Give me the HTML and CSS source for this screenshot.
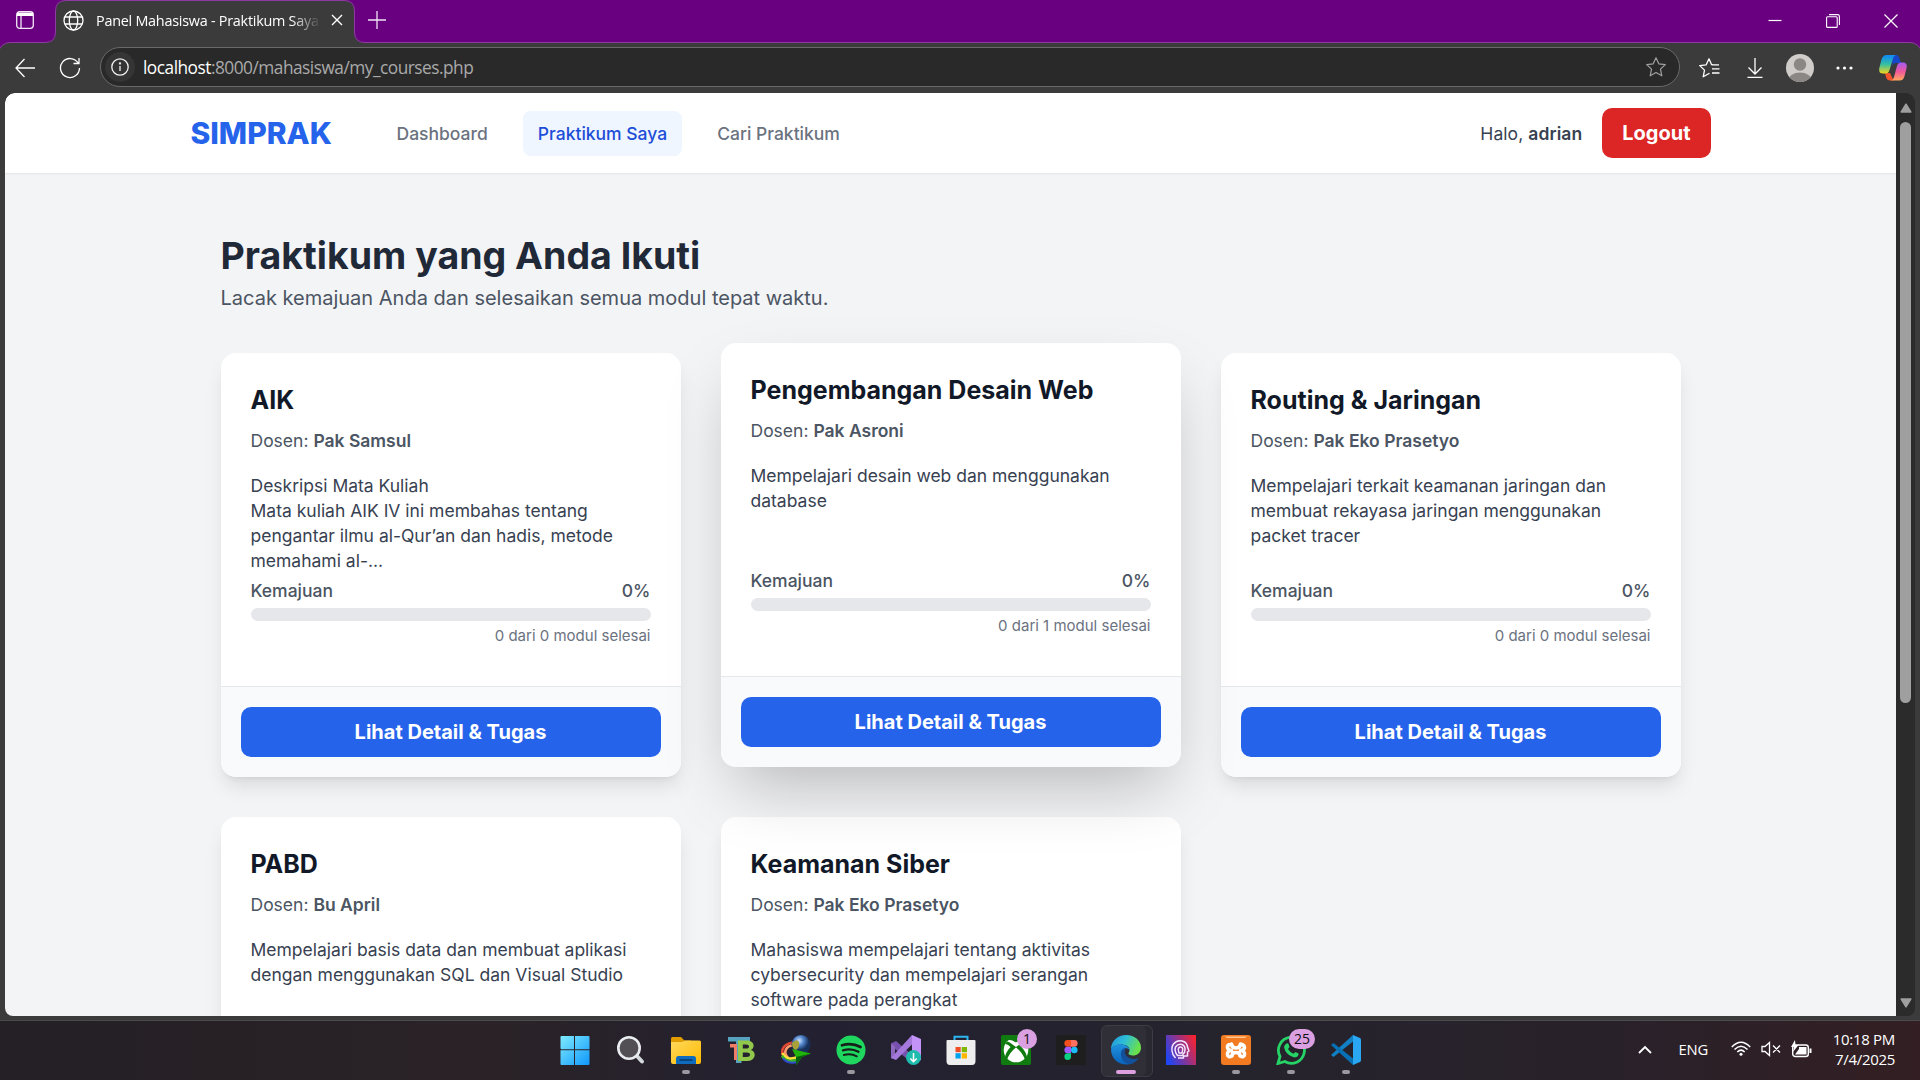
FILE: index.html
```html
<!DOCTYPE html>
<html lang="id">
<head>
<meta charset="utf-8">
<title>Panel Mahasiswa - Praktikum Saya</title>
<link rel="stylesheet" href="styles.css">
</head>
<body>
<div class="screen">
  <div class="browser">
    <svg class="frame" width="1920" height="60" viewBox="0 0 1920 60">
      <path d="M-2 70V53Q1 42.500 10 42.500H45Q55.500 42.500 55.500 32V11Q55.500 .5 66 .5H344Q354.500 .5 354.500 11V32Q354.500 42.500 365 42.500H1910Q1919 42.500 1922 53V70Z" fill="#3b3b3b" stroke="#8e3aa3"/>
    </svg>
    <div class="tabstrip">
      <svg class="workspace" width="18" height="18" viewBox="0 0 18 18" fill="none" stroke="#f3e6f6" stroke-width="1.300"><rect x=".7" y=".7" width="16.600" height="16.600" rx="3"/><path d="M1 1.500H17V5H1Z" fill="#fff" stroke="none"/><path d="M5 5V17"/></svg>
      <div class="tab">
        <svg width="21" height="21" viewBox="0 0 21 21" fill="none" stroke="#fff" stroke-width="1.300"><circle cx="10.500" cy="10.500" r="9.500"/><ellipse cx="10.500" cy="10.500" rx="4.200" ry="9.500"/><path d="M1.800 7H19.200M1.800 14H19.200"/></svg>
        <span class="tab-title">Panel Mahasiswa - Praktikum Saya</span>
        <svg width="12" height="12" viewBox="0 0 12 12" stroke="#fff" stroke-width="1.400"><path d="M1 1L11 11M11 1L1 11"/></svg>
      </div>
      <svg class="newtab" width="18" height="18" viewBox="0 0 18 18" stroke="#f0e4f4" stroke-width="1.300"><path d="M9 0V18M0 9H18"/></svg>
      <div class="window-buttons">
        <svg width="14" height="14" viewBox="0 0 14 14" stroke="#fff" stroke-width="1.200"><path d="M.5 6.500H13.500"/></svg>
        <svg width="14" height="14" viewBox="0 0 14 14" fill="none" stroke="#fff" stroke-width="1.100"><rect x=".6" y="2.800" width="10.600" height="10.600" rx="1"/><path d="M3 .6H11.500Q13.400 .6 13.400 2.500V11"/></svg>
        <svg width="14" height="14" viewBox="0 0 14 14" stroke="#fff" stroke-width="1.200"><path d="M.5 .5L13.500 13.500M13.500 .5L.5 13.500"/></svg>
      </div>
    </div>
    <div class="toolbar">
      <svg class="back" width="20" height="20" viewBox="0 0 20 20" fill="none" stroke="#fff" stroke-width="1.300"><path d="M20 10H1M9.500 1L1 10L9.500 19"/></svg>
      <svg class="reload" width="22" height="22" viewBox="0 0 22 22" fill="none" stroke="#fff" stroke-width="1.300"><path d="M19.200 6.200A9.500 9.500 0 1 0 20.500 11M20 1V6.500H14.500"/></svg>
      <div class="address">
        <span class="info"><svg width="18" height="18" viewBox="0 0 18 18" fill="none" stroke="#f2f2f2" stroke-width="1.300"><circle cx="9" cy="9" r="8.200"/><path d="M9 8V13"/><circle cx="9" cy="5.500" r=".5"/></svg></span>
        <span class="url"><b>localhost</b>:8000/mahasiswa/my_courses.php</span>
        <svg class="fav" width="20" height="20" viewBox="0 0 20 20" fill="none" stroke="#a0a0a0" stroke-width="1.200" stroke-linejoin="round"><path d="M10 .8L12.800 6.800L19.300 7.600L14.500 12.100L15.800 18.800L10 15.500L4.200 18.800L5.500 12.100L.7 7.600L7.200 6.800Z"/></svg>
      </div>
      <div class="tools">
        <svg width="21" height="20" viewBox="0 0 21 20" fill="none" stroke="#fff" stroke-width="1.300" stroke-linejoin="round"><path d="M20 6.800H14L12.500 6.500L10 .8L7.200 6.800L.7 7.600L5.500 12.100L4.200 18.800L10.500 15.200M13 10.800H20.500M13 15H20.500"/></svg>
        <svg width="16" height="20" viewBox="0 0 16 20" fill="none" stroke="#fff" stroke-width="1.300"><path d="M8 0V15.500M1.500 9.500L8 16L14.500 9.500M.5 19.300H15.500"/></svg>
        <svg width="28" height="28" viewBox="0 0 28 28"><defs><clipPath id="avatar"><circle cx="14" cy="14" r="14"/></clipPath></defs><g clip-path="url(#avatar)"><rect width="28" height="28" fill="#cfccc9"/><circle cx="14" cy="10.500" r="6.200" fill="#8b8784"/><ellipse cx="14" cy="26" rx="11.500" ry="7.500" fill="#8b8784"/></g></svg>
        <svg width="17" height="4" viewBox="0 0 17 4" fill="#fff"><circle cx="2" cy="2" r="1.600"/><circle cx="8.500" cy="2" r="1.600"/><circle cx="15" cy="2" r="1.600"/></svg>
        <svg width="28" height="26" viewBox="0 0 28 26"><defs><linearGradient id="cpa" x1="0" y1="0" x2="0" y2="1"><stop offset=".1" stop-color="#1390ec"/><stop offset=".5" stop-color="#35c0a0"/><stop offset="1" stop-color="#f4d51c"/></linearGradient><linearGradient id="cpb" x1="0" y1="0" x2="0" y2="1"><stop stop-color="#a45bf2"/><stop offset=".5" stop-color="#f0589c"/><stop offset="1" stop-color="#ffa75c"/></linearGradient></defs><path d="M13 0H17Q19.500 0 20.500 3.500L22 8H17Q14.500 8 13.500 11Z" fill="#1647c8"/><path d="M6 18H11L14.500 25.500H11Q8 25.500 7 22Z" fill="#f4542b"/><path d="M7.500 0H17.500Q15 0 14 3.500L10.500 15Q9.500 18.500 6.500 18.500H4Q-.6 18.500 .3 13L2.500 4.500Q4 0 7.500 0Z" fill="url(#cpa)"/><path d="M20.500 25.500H11Q14 25.500 15 22L18 11Q19 7.500 22 7.500H24Q28.600 7.500 27.600 13L25.500 21Q24.500 25.500 20.500 25.500Z" fill="url(#cpb)"/></svg>
      </div>
    </div>
    <div class="viewport">
      <div class="page">
        <nav class="nav">
          <div class="container nav-inner">
            <span class="brand">SIMPRAK</span>
            <div class="links"><a>Dashboard</a><a class="active">Praktikum Saya</a><a>Cari Praktikum</a></div>
            <span class="hello">Halo, <b>adrian</b></span>
            <a class="logout">Logout</a>
          </div>
        </nav>
        <main class="container main">
          <h1>Praktikum yang Anda Ikuti</h1>
          <p class="lead">Lacak kemajuan Anda dan selesaikan semua modul tepat waktu.</p>
          <div class="grid">
            <article class="card">
              <div class="card-body">
                <h3>AIK</h3><p class="dosen">Dosen: <b>Pak Samsul</b></p>
                <p class="desc">Deskripsi Mata Kuliah<br>Mata kuliah AIK IV ini membahas tentang pengantar ilmu al-Qur’an dan hadis, metode memahami al-...</p>
                <div class="progress-head"><span>Kemajuan</span><span>0%</span></div><div class="bar"></div><p class="count">0 dari 0 modul selesai</p>
              </div>
              <div class="card-foot"><a class="btn">Lihat Detail &amp; Tugas</a></div>
            </article>
            <article class="card hovered">
              <div class="card-body">
                <h3>Pengembangan Desain Web</h3><p class="dosen">Dosen: <b>Pak Asroni</b></p>
                <p class="desc">Mempelajari desain web dan menggunakan database</p>
                <div class="progress-head"><span>Kemajuan</span><span>0%</span></div><div class="bar"></div><p class="count">0 dari 1 modul selesai</p>
              </div>
              <div class="card-foot"><a class="btn">Lihat Detail &amp; Tugas</a></div>
            </article>
            <article class="card">
              <div class="card-body">
                <h3>Routing &amp; Jaringan</h3><p class="dosen">Dosen: <b>Pak Eko Prasetyo</b></p>
                <p class="desc">Mempelajari terkait keamanan jaringan dan membuat rekayasa jaringan menggunakan packet tracer</p>
                <div class="progress-head"><span>Kemajuan</span><span>0%</span></div><div class="bar"></div><p class="count">0 dari 0 modul selesai</p>
              </div>
              <div class="card-foot"><a class="btn">Lihat Detail &amp; Tugas</a></div>
            </article>
            <article class="card">
              <div class="card-body">
                <h3>PABD</h3><p class="dosen">Dosen: <b>Bu April</b></p>
                <p class="desc">Mempelajari basis data dan membuat aplikasi dengan menggunakan SQL dan Visual Studio</p>
              </div>
            </article>
            <article class="card">
              <div class="card-body">
                <h3>Keamanan Siber</h3><p class="dosen">Dosen: <b>Pak Eko Prasetyo</b></p>
                <p class="desc">Mahasiswa mempelajari tentang aktivitas cybersecurity dan mempelajari serangan software pada perangkat</p>
              </div>
            </article>
          </div>
        </main>
      </div>
      <div class="scrollbar">
        <svg width="12" height="10" viewBox="0 0 12 10"><path d="M6 1.200L10.800 9H1.200Z" fill="#9f9f9f" stroke="#9f9f9f" stroke-width="1.500" stroke-linejoin="round"/></svg>
        <div class="thumb"></div>
        <svg class="down" width="12" height="10" viewBox="0 0 12 10"><path d="M6 8.800L10.800 1H1.200Z" fill="#9f9f9f" stroke="#9f9f9f" stroke-width="1.500" stroke-linejoin="round"/></svg>
      </div>
    </div>
  </div>
  <footer class="taskbar">
    <div class="apps">
      <div class="app start"><svg width="30" height="30" viewBox="0 0 30 30"><defs><linearGradient id="win" x1="0" y1="0" x2="1" y2="1"><stop stop-color="#7feaff"/><stop offset="1" stop-color="#0f98fb"/></linearGradient></defs><path d="M1.500 1H14V14.200H1.500Q.5 14.200 .5 13V2Q.5 1 1.500 1ZM15 1H28.500Q29.500 1 29.500 2V14.200H15ZM.5 15.300H14V30H1.500Q.5 30 .5 29ZM15 15.300H29.500V29Q29.500 30 28.500 30H15Z" fill="url(#win)"/></svg></div>
      <div class="app"><svg width="30" height="30" viewBox="0 0 30 30"><path d="M20 20L26 26.500" stroke="#d4dadd" stroke-width="4" stroke-linecap="round"/><circle cx="13" cy="13" r="10.700" fill="#524f55" stroke="#e9edef" stroke-width="2.600"/></svg></div>
      <div class="app running"><svg width="30" height="30" viewBox="0 0 30 30"><defs><linearGradient id="fold" x1="0" y1="0" x2="1" y2="1"><stop stop-color="#ffda5e"/><stop offset="1" stop-color="#ffb900"/></linearGradient></defs><path d="M0 3.500Q0 2 1.500 2H10L13.500 5.500H20V12H0Z" fill="#e09c00"/><path d="M0 7H11L14 5.500H28.500Q30 5.500 30 7V27Q30 29 28 29H2Q0 29 0 27Z" fill="url(#fold)"/><path d="M5 29V23.500Q5 21 7.500 21H22.500Q25 21 25 23.500V29Z" fill="#0f6cbd"/><path d="M9 25H21" stroke="#05396e" stroke-width="1.500" stroke-linecap="round"/></svg></div>
      <div class="app"><svg width="30" height="30" viewBox="0 0 30 30"><path d="M2 2H24V6.500H15.500V28H10V6.500H2Z" fill="#56a3bf"/><path d="M4 9H11V25H8V12.500H4Z" fill="#ef7e68"/><path d="M12 5.500H20.500C30 5.500 28.500 14.500 24.500 15C31 16 30 26 21.500 26H12ZM16.800 9.500V13.500H20Q23 13.500 23 11.500T20 9.500ZM16.800 17.500V22H20.500Q24 22 24 19.800T20.500 17.500Z" fill="#91c84c" fill-rule="evenodd"/></svg></div>
      <div class="app"><svg width="30" height="30" viewBox="0 0 30 30"><defs><radialGradient id="globe" cx=".4" cy=".3"><stop stop-color="#d2e6ff"/><stop offset=".5" stop-color="#5082ca"/><stop offset="1" stop-color="#17305b"/></radialGradient></defs><g fill="none" stroke-width="2.600"><path d="M12 7.500C1 9-2 18 5 24" stroke="#e44832"/><path d="M13 10C4 11 2 18 7 22.500" stroke="#ff9a6a"/><path d="M1.500 18C4 24 9 25 17 22" stroke="#ffe23a"/><path d="M1 20.500C4 26.500 9 27.500 17 24.500" stroke="#35b52c"/><path d="M2 23.500C6 28 11 28.500 17 27" stroke="#304cce" stroke-width="2"/></g><circle cx="20" cy="9.500" r="9.500" fill="url(#globe)"/><path d="M11 8Q16 3 18 7Q19 12 15 15Q11 14 11 8Z" fill="#a9a339"/><path d="M11 14L30 18.500L21 22L15 30L15 22Z" fill="#20b40c"/><path d="M15 22L30 18.500L21 22L15 30Z" fill="#085f0b"/></svg></div>
      <div class="app running"><svg width="30" height="30" viewBox="0 0 30 30"><circle cx="15" cy="15" r="14.500" fill="#1fd75f"/><g fill="none" stroke="#15201a" stroke-linecap="round"><path d="M6 10.300Q16 7.500 24.500 12" stroke-width="2.700"/><path d="M7 15.300Q15.500 13 22.500 16.800" stroke-width="2.300"/><path d="M7.800 20Q15 18 20.800 21.300" stroke-width="1.900"/></g></svg></div>
      <div class="app"><svg width="30" height="30" viewBox="0 0 30 30"><path d="M0 8.500L5 6L24 22.500L21 28L4 14V20.500L0 23.500Z" fill="#7850ad"/><path d="M0 8.500L4 11.500V20.500L0 23.500Z" fill="#8e68bf"/><path d="M5 25L0 23L21 0V9.500Z" fill="#a579dc"/><path d="M21 0L30 4V25L21 29Z" fill="#c493f7"/><circle cx="22.500" cy="22.500" r="7.500" fill="#1fbcae"/><path d="M22.500 18V26.500M19.300 23.500L22.500 26.700L25.700 23.500" stroke="#fff" stroke-width="1.500" fill="none"/></svg></div>
      <div class="app"><svg width="30" height="30" viewBox="0 0 30 30"><path d="M8.500 7V1.800H21.500V7" fill="none" stroke="#2ab6ef" stroke-width="2"/><path d="M1.500 5H28.500Q29.500 5 29.500 6V26Q29.500 30 26 30H4Q.5 30 .5 26V6Q.5 5 1.500 5Z" fill="#eee"/><path d="M9.500 12H14.700V17.200H9.500Z" fill="#f04e24"/><path d="M15.700 12H21V17.200H15.700Z" fill="#7db700"/><path d="M9.500 18.200H14.700V23.500H9.500Z" fill="#00a2ed"/><path d="M15.700 18.200H21V23.500H15.700Z" fill="#fdb700"/></svg></div>
      <div class="app"><svg width="30" height="30" viewBox="0 0 30 30"><rect width="30" height="30" rx="2" fill="#107c10"/><circle cx="15" cy="15" r="12.300" fill="#fff"/><path d="M6 5Q10 4 15 7.500Q20 4 24 5Q20 1.500 15 1.500Q10 1.500 6 5ZM11.500 9.500Q8 6.500 6 6.500L4 9Q7 9 9.500 12Q4 18 4 23.500L6 24.500Q9 17 15 12.500Q21 17 24 24.500L26 23.500Q26 18 20.500 12Q23 9 26 9L24 6.500Q22 6.500 18.500 9.500L15 12Z" fill="#107c10"/></svg><span class="badge">1</span></div>
      <div class="app"><svg width="30" height="30" viewBox="0 0 30 30"><rect width="30" height="30" rx="1" fill="#1e1e1e"/><path d="M15 5H11.700A3.300 3.300 0 0 0 11.700 11.700H15Z" fill="#f24e1e"/><path d="M15 5H18.300A3.300 3.300 0 0 1 18.300 11.700H15Z" fill="#ff7262"/><path d="M15 11.700H11.700A3.300 3.300 0 0 0 11.700 18.300H15Z" fill="#a259ff"/><circle cx="18.300" cy="15" r="3.300" fill="#1abcfe"/><path d="M11.700 18.300H15V21.500A3.300 3.300 0 1 1 11.700 18.300Z" fill="#0acf83"/></svg></div>
      <div class="app current"><svg width="30" height="30" viewBox="0 0 30 30"><defs><linearGradient id="ea" x1="0" y1="0" x2="1" y2=".35"><stop stop-color="#2192dc"/><stop offset=".5" stop-color="#2ebfd7"/><stop offset="1" stop-color="#69df4c"/></linearGradient><linearGradient id="eb" x1="0" y1="0" x2="0" y2="1"><stop stop-color="#1f92e0"/><stop offset="1" stop-color="#0a62b8"/></linearGradient></defs><path d="M0 14C0 6 7 0 15 0C24 0 30 6 30 12.500C30 18 26 20.500 22 20.500C19 20.500 17 19.500 17.500 18C20 15 18 10 11.500 9.500C6 9 1 11.500 0 14Z" fill="url(#ea)"/><path d="M0 14C2 10 7 8.500 12 9.600C16 10.500 18.500 13 18.500 15C15 11 10 14.500 10.500 19C11 25 18 28 23 27.500C13 33 0 27 0 14Z" fill="url(#eb)"/><path d="M12.500 13.500C8 17 9.500 25 15 28C21 31 26 26 28 22.500C24 25.500 17 24 14.500 19.500C13.500 17.500 13.500 15.500 15 13.700Z" fill="#12509c"/></svg></div>
      <div class="app"><svg width="30" height="30" viewBox="0 0 30 30"><defs><linearGradient id="pr" x1="0" y1=".7" x2="1" y2=".2"><stop stop-color="#2145f0"/><stop offset="1" stop-color="#f52332"/></linearGradient></defs><rect width="30" height="30" fill="url(#pr)"/><g fill="none" stroke="#f3e6ff" stroke-width="1.500" stroke-linejoin="round"><path d="M9.500 23L7 19.500Q4.500 13 7.500 9Q11 5 16 6Q21 7 21.500 12L23 16L21.500 17V21H17.500V23H12"/><path d="M11.500 20.500Q8 16 9.500 12Q12 8.500 16 9.500Q19.500 11 19 15Q19 18 17 19V20.500Z"/><path d="M13 18Q11 12 14.500 12Q18 12 16 18Z"/></g></svg></div>
      <div class="app running"><svg width="30" height="30" viewBox="0 0 30 30"><rect width="30" height="30" rx="3" fill="#f27a20"/><path d="M4 1.500H26L24 3H6Z" fill="#ffc794"/><path d="M9.500 9.500Q6 9.500 6.500 12.500T10.500 15.500Q6 16 6.500 19.500T11 21Q11 17.500 15 17.500T19 21Q23 23 23.500 19.500T19.500 15.500Q23.500 15 23.500 12.500T19.500 9Q19 13 15 13T10.500 9Z" fill="none" stroke="#fff" stroke-width="3.600" stroke-linejoin="round"/></svg></div>
      <div class="app running"><svg width="30" height="30" viewBox="0 0 30 30"><path d="M2 28.500L4 21.500A13 13 0 1 1 8.800 26.500Z" fill="none" stroke="#25d366" stroke-width="2.800"/><path d="M10.500 8.500Q12 8 12.500 9L13.500 12L12 14Q14 17.500 17.500 18.800L19.500 17L22.500 18.500Q23 22 18.500 22.500Q9.500 20 8 12Q8.500 9.500 10.500 8.500Z" fill="#25d366"/></svg><span class="badge wide">25</span></div>
      <div class="app running"><svg width="30" height="30" viewBox="0 0 30 30"><path d="M0 20L2.500 22L22 6.500V0Z" fill="#1180c4"/><path d="M0 10L2.500 8L22 23.500V30Z" fill="#0871b5"/><path d="M22 0L29 3Q30 3.500 30 5V25Q30 26.500 29 27L22 30Z" fill="#2aa7f2"/></svg></div>
    </div>
    <div class="tray">
      <svg class="chev" width="14" height="9" viewBox="0 0 14 9" fill="none" stroke="#fff" stroke-width="1.800"><path d="M1 8L7 2L13 8"/></svg>
      <span class="lang">ENG</span>
      <div class="status">
        <svg width="20" height="16" viewBox="0 0 20 16" fill="none" stroke="#fff" stroke-width="1.500"><path d="M.8 6Q10-3.500 19.200 6M3.500 8.500Q10 1.800 16.500 8.500M6.300 11Q10 7.300 13.700 11"/><circle cx="10" cy="13.300" r="1.500" fill="#fff" stroke="none"/></svg>
        <svg width="20" height="16" viewBox="0 0 20 16" fill="none" stroke="#fff" stroke-width="1.300"><path d="M1 5.500H4L8.500 1.500V14.500L4 10.500H1ZM12 4.500L19 11.500M19 4.500L12 11.500"/></svg>
        <svg width="21" height="18" viewBox="0 0 21 18"><rect x="1.700" y="5" width="15.600" height="11.500" rx="2.500" fill="none" stroke="#fff" stroke-width="1.400"/><path d="M8 7H15.500V14.500H4L8 9ZM18.500 8.500H20.500V13H18.500Z" fill="#fff"/><path d="M4 0L0 7H3L2 12L7.500 5H4.500Z" fill="#fff"/></svg>
      </div>
      <div class="clock"><span>10:18 PM</span><span>7/4/2025</span></div>
    </div>
  </footer>
</div>
</body>
</html>
```
FILE: styles.css
```css
* { box-sizing: border-box; }
body { margin: 0; overflow: hidden; font-family: "Inter", "Liberation Sans", sans-serif; }
h1, h3, p { margin: 0; }
svg { display: block; flex: none; }

.screen { width: 1920px; height: 1080px; display: flex; flex-direction: column; }
.browser { position: relative; height: 1021px; background: #3b3b3b; display: flex; flex-direction: column; font-family: "Open Sans", "Noto Sans", sans-serif; border-bottom: 1px solid #4b4b4d; }
.frame { position: absolute; left: 0; top: 0; background: #69007f; }

.tabstrip { position: relative; height: 42px; display: flex; align-items: center; padding-left: 16px; flex: none; }
.workspace { margin-top: -2px; }
.tab { width: 300px; height: 42px; margin-left: 21px; padding: 0 14px 2px 8px; display: flex; align-items: center; gap: 12px; color: #fff; font-size: 14.400px; }
.tab-title { width: 224px; white-space: nowrap; letter-spacing: -.25px; mask-image: linear-gradient(to right, #000 195px, transparent 225px); }
.newtab { margin: -3px 0 0 13px; }
.window-buttons { margin-left: auto; padding-right: 22px; display: flex; gap: 44px; }

.toolbar { position: relative; height: 51px; display: flex; align-items: center; padding-left: 15px; flex: none; }
.reload { margin-left: 24px; }
.address { width: 1580px; height: 40px; margin: 0 0 1px 19px; border: 1px solid #6a6a6a; border-radius: 20px; background: #292929; display: flex; align-items: center; padding: 0 13px 0 4px; }
.info { width: 30px; height: 30px; border-radius: 50%; background: #353535; display: flex; align-items: center; justify-content: center; }
.url { margin-left: 8px; color: #a9a9a9; font-size: 17.300px; letter-spacing: -.5px; }
.url b { color: #fff; font-weight: 400; }
.fav { margin-left: auto; }
.tools { display: flex; align-items: center; margin-left: 19px; }
.tools svg:nth-child(2) { margin-left: 27px; }
.tools svg:nth-child(3) { margin-left: 23px; }
.tools svg:nth-child(4) { margin-left: 22px; }
.tools svg:nth-child(5) { margin-left: 26px; }

.viewport { position: relative; height: 923px; margin: 0 5px; display: flex; overflow: hidden; border-radius: 10px 10px 8px 8px; background: #2b2b2b; }
.page { width: 1891px; height: 923px; overflow: hidden; background: #f3f4f6; font-family: "Inter", "Liberation Sans", sans-serif; border-top-left-radius: 10px; }
.container { width: 1520px; margin: 0 auto; }
.nav { height: 80px; background: #fff; box-shadow: 0 1px 2px rgba(0,0,0,.07); }
.nav-inner { height: 80px; display: flex; align-items: center; font-size: 17.500px; line-height: 25px; }
.brand { font-size: 30px; line-height: 40px; font-weight: 800; color: #2563eb; width: 141px; }
.links { display: flex; gap: 20px; margin-left: 50px; font-weight: 500; color: #6b7280; }
.links a { padding: 10px 15px; border-radius: 7.500px; }
.links .active { background: #eff6ff; color: #1d4ed8; }
.hello { margin-left: auto; color: #374151; letter-spacing: .08px; }
.hello b { font-weight: 600; }
.logout { margin-left: 20px; padding: 10px 20px; border-radius: 10px; background: #dc2626; color: #fff; font-size: 20px; line-height: 30px; font-weight: 700; }

.main { padding: 60px 30px; }
h1 { font-size: 37.500px; line-height: 45px; font-weight: 700; color: #1f2937; }
.lead { margin-top: 5px; font-size: 20px; line-height: 30px; color: #4b5563; }
.grid { margin-top: 40px; display: grid; grid-template-columns: repeat(3, 460px); grid-auto-rows: 424px; gap: 40px; }
.card { display: flex; flex-direction: column; overflow: hidden; border-radius: 15px; background: #fff; box-shadow: 0 12.500px 18.750px -3.750px rgba(0,0,0,.1), 0 5px 7.500px -5px rgba(0,0,0,.1); }
.hovered { transform: translateY(-10px); box-shadow: 0 31.250px 62.500px -15px rgba(0,0,0,.25); z-index: 1; }
.card-body { height: 333px; padding: 30px; color: #374151; font-size: 17.500px; line-height: 25px; }
h3 { font-size: 25px; line-height: 35px; font-weight: 700; color: #111827; }
.dosen { margin: 10px 0 20px; color: #4b5563; }
.dosen b { font-weight: 600; }
.desc { height: 100px; margin-bottom: 5px; }
.progress-head { display: flex; justify-content: space-between; font-weight: 500; color: #4b5563; margin-bottom: 5px; }
.bar { height: 12.500px; border-radius: 7px; background: #e5e7eb; }
.count { margin-top: 5px; text-align: right; font-size: 15px; line-height: 20px; color: #6b7280; }
.card-foot { flex: 1; padding: 20px; border-top: 1px solid #e5e7eb; background: #f9fafb; }
.btn { display: block; height: 50px; border-radius: 10px; background: #2563eb; color: #fff; text-align: center; font-size: 20px; line-height: 50px; font-weight: 700; }

.scrollbar { width: 19px; background: #2b2b2b; display: flex; flex-direction: column; align-items: center; padding: 10px 0 8px; }
.thumb { width: 11px; height: 581px; margin-top: 9px; border-radius: 6px; background: #9f9f9f; }
.down { margin-top: auto; }

.taskbar { height: 59px; display: flex; justify-content: space-between; padding-left: 547px; color: #fff; font-family: "Open Sans", "Noto Sans", sans-serif; background: linear-gradient(to right, #242026, #2a2226 25%, #232131 42%, #25232c 65%, #29212a 84%, #331f23 100%); }
.apps { display: flex; padding-top: 4px; }
.app { position: relative; width: 55px; height: 50px; display: flex; align-items: center; justify-content: center; }
.start { margin-right: 1px; }
.running::after { content: ""; position: absolute; left: 24px; bottom: 1px; width: 8px; height: 4px; border-radius: 2px; background: #9b979f; }
.current::before { content: ""; position: absolute; left: 3px; top: 0; width: 50px; height: 50px; border: 1px solid #3d3b44; border-radius: 6px; background: #302e37; box-shadow: inset -6px 0 #292730; }
.current svg { position: relative; }
.current::after { content: ""; position: absolute; left: 18px; bottom: 1px; width: 20px; height: 4px; border-radius: 2px; background: #dc9fe0; }
.badge { position: absolute; left: 29px; top: 4px; width: 20px; height: 20px; border-radius: 10px; background: #dba0e2; color: #111; font-size: 14px; line-height: 20px; text-align: center; }
.badge.wide { left: 26px; width: 26px; }
.tray { display: flex; align-items: center; padding: 0 25px 3px 0; }
.lang { margin-left: 26px; font-size: 14.800px; letter-spacing: -.2px; }
.status { display: flex; align-items: center; gap: 10px; margin-left: 23px; }
.clock { margin-left: 15px; width: 68px; display: flex; flex-direction: column; align-items: flex-end; font-size: 15px; line-height: 20px; letter-spacing: -.3px; white-space: nowrap; }
```
